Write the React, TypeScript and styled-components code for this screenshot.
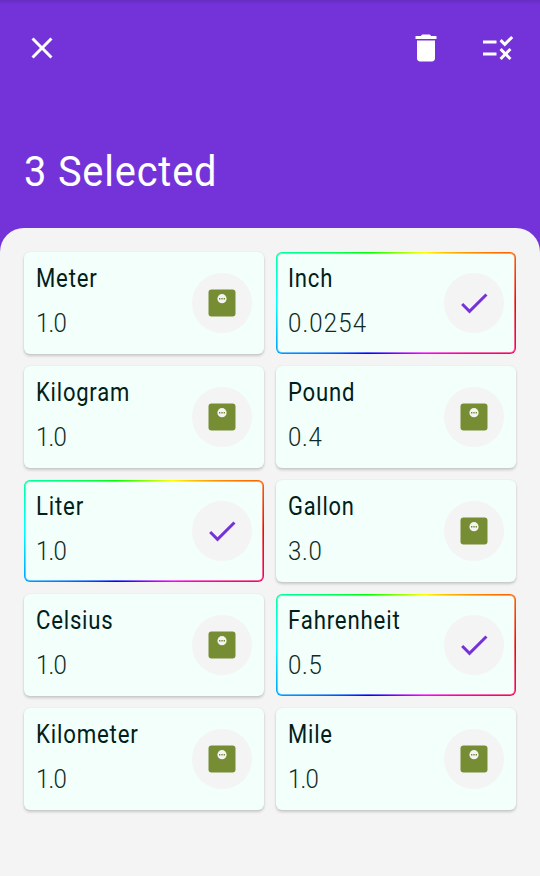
import React from "react";
import styled, { createGlobalStyle } from "styled-components";

const GlobalStyle = createGlobalStyle`
  * { box-sizing: border-box; }
  body {
    margin: 0;
    background: #7433d9;
    font-family: Roboto, "Liberation Sans", sans-serif;
  }
`;

const Screen = styled.main`
  display: flex;
  flex-direction: column;
  width: 540px;
  height: 876px;
  overflow: hidden;
  background: linear-gradient(#662dc3 0, #7433d9 5px);
`;

const Header = styled.header`
  flex: 0 0 228px;
  display: flex;
  flex-direction: column;
  justify-content: space-between;
`;

const Toolbar = styled.div`
  display: flex;
  align-items: center;
  height: 96px;
  padding: 0 24px;
`;

const Actions = styled.div`
  display: flex;
  gap: 36px;
  margin-left: auto;
`;

const IconButton = styled.button`
  display: flex;
  width: 36px;
  height: 36px;
  padding: 0;
  border: 0;
  background: none;
  color: #fff;
`;

const Glyph = styled.svg`
  display: block;
  width: 36px;
  height: 36px;
  fill: currentColor;
`;

const Title = styled.h1`
  margin: 0 24px 30px;
  color: #fff;
  font-size: 43px;
  line-height: 54px;
  font-weight: 450;
  white-space: nowrap;
  letter-spacing: 0.9px;
  transform: scaleX(0.925);
  transform-origin: left;
`;

const Panel = styled.section`
  flex: 1;
  padding: 24px;
  border-radius: 24px 24px 0 0;
  background: #f4f4f4;
`;

const Grid = styled.div`
  display: grid;
  grid-template-columns: 240px 240px;
  grid-auto-rows: 102px;
  gap: 12px;
`;

/* The selected outline is one solid pixel followed by one half-strength pixel. */
const Card = styled.article<{ $selected: boolean }>`
  display: flex;
  align-items: center;
  justify-content: space-between;
  padding: 1px;
  border: 1px solid transparent;
  border-radius: 6px;
  background: ${(p) =>
    p.$selected
      ? `linear-gradient(#f2fffb, #f2fffb) content-box,
         linear-gradient(rgba(242, 255, 251, 0.4), rgba(242, 255, 251, 0.4)) padding-box,
         conic-gradient(from 90deg, #f00, #f0f, #00f, #0ff, #0f0, #ff0, #f00) border-box`
      : "#f2fffb"};
  box-shadow: ${(p) =>
    p.$selected ? "none" : "0 2px 3px rgba(0, 0, 0, 0.18), 0 0 2px rgba(0, 0, 0, 0.07)"};
`;

const Texts = styled.div`
  display: flex;
  flex-direction: column;
  gap: 15px;
  margin: 0 0 4px 10px;
`;

const Name = styled.span<{ $scale: number }>`
  color: #00201a;
  font-size: 25px;
  line-height: 30px;
  white-space: nowrap;
  letter-spacing: 0.9px;
  transform: scaleX(${(p) => p.$scale});
  transform-origin: left;
`;

const Value = styled.span<{ $spacing: number }>`
  color: #0d2b24;
  font-size: 25px;
  line-height: 30px;
  font-weight: 300;
  letter-spacing: ${(p) => p.$spacing}px;
  transform: scaleX(0.96);
  transform-origin: left;
`;

const Badge = styled.div`
  display: flex;
  flex: none;
  align-items: center;
  justify-content: center;
  width: 60px;
  height: 60px;
  margin-right: 10px;
  border-radius: 50%;
  background: #f4f4f4;
  color: #7433d9;
`;

const ScaleIcon = () => (
  <Glyph viewBox="0 0 36 36">
    <rect x="4.5" y="4.5" width="27" height="27" rx="3" fill="#768d34" />
    <circle cx="18" cy="13.7" r="4.6" fill="#f4f4f4" />
    <path d="M15 13h1.4v1.4H15zM17.3 13h1.4v1.4h-1.4zM19.6 13H21v1.4h-1.4z" fill="#768d34" />
  </Glyph>
);

const CheckIcon = () => (
  <Glyph viewBox="0 0 24 24">
    <path d="M9 16.17 4.83 12l-1.42 1.41L9 19 21 7l-1.41-1.41z" />
  </Glyph>
);

type Unit = {
  name: string;
  value: string;
  scale: number;
  spacing: number;
  selected?: boolean;
};

const units: Unit[] = [
  { name: "Meter", value: "1.0", scale: 0.885, spacing: -0.8 },
  { name: "Inch", value: "0.0254", scale: 0.885, spacing: 1.2, selected: true },
  { name: "Kilogram", value: "1.0", scale: 0.88, spacing: -0.8 },
  { name: "Pound", value: "0.4", scale: 0.885, spacing: 0.8 },
  { name: "Liter", value: "1.0", scale: 0.89, spacing: -0.8, selected: true },
  { name: "Gallon", value: "3.0", scale: 0.875, spacing: 0.8 },
  { name: "Celsius", value: "1.0", scale: 0.885, spacing: -0.8 },
  { name: "Fahrenheit", value: "0.5", scale: 0.89, spacing: 0.8, selected: true },
  { name: "Kilometer", value: "1.0", scale: 0.89, spacing: -0.8 },
  { name: "Mile", value: "1.0", scale: 0.88, spacing: -0.8 },
];

export default function App() {
  return (
    <Screen>
      <GlobalStyle />
      <Header>
        <Toolbar>
          <IconButton aria-label="Close">
            <Glyph viewBox="0 0 24 24">
              <path d="M19 6.41 17.59 5 12 10.59 6.41 5 5 6.41 10.59 12 5 17.59 6.41 19 12 13.41 17.59 19 19 17.59 13.41 12z" />
            </Glyph>
          </IconButton>
          <Actions>
            <IconButton aria-label="Delete">
              <Glyph viewBox="0 0 24 24">
                <path d="M6 19c0 1.1.9 2 2 2h8c1.1 0 2-.9 2-2V7H6v12zM19 4h-3.5l-1-1h-5l-1 1H5v2h14V4z" />
              </Glyph>
            </IconButton>
            <IconButton aria-label="Invert selection">
              <Glyph viewBox="0 0 24 24">
                <path d="M16.54 11 13 7.46l1.41-1.41 2.12 2.12 4.24-4.24 1.41 1.41L16.54 11zM11 7H2v2h9V7zm10 6.41L19.59 12 17 14.59 14.41 12 13 13.41 15.59 16 13 18.59 14.41 20 17 17.41 19.59 20 21 18.59 18.41 16 21 13.41zM11 15H2v2h9v-2z" />
              </Glyph>
            </IconButton>
          </Actions>
        </Toolbar>
        <Title>3 Selected</Title>
      </Header>
      <Panel>
        <Grid>
          {units.map((unit) => (
            <Card key={unit.name} $selected={!!unit.selected}>
              <Texts>
                <Name $scale={unit.scale}>{unit.name}</Name>
                <Value $spacing={unit.spacing}>{unit.value}</Value>
              </Texts>
              <Badge>{unit.selected ? <CheckIcon /> : <ScaleIcon />}</Badge>
            </Card>
          ))}
        </Grid>
      </Panel>
    </Screen>
  );
}
